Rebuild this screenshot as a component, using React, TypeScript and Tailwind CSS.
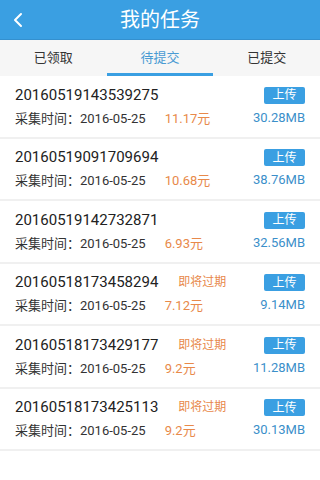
import React from 'react';

type Task = { id: string; price: string; size: string; expiring?: boolean };

const tasks: Task[] = [
  { id: '20160519143539275', price: '11.17元', size: '30.28MB' },
  { id: '20160519091709694', price: '10.68元', size: '38.76MB' },
  { id: '20160519142732871', price: '6.93元', size: '32.56MB' },
  { id: '20160518173458294', price: '7.12元', size: '9.14MB', expiring: true },
  { id: '20160518173429177', price: '9.2元', size: '11.28MB', expiring: true },
  { id: '20160518173425113', price: '9.2元', size: '30.13MB', expiring: true },
];

const tabs = ['已领取', '待提交', '已提交'];

export default function App() {
  return (
    <div className="w-[320px] h-[480px] bg-white overflow-hidden font-['Roboto','Noto_Sans_CJK_SC',sans-serif]">
      <header className="relative h-[40px] bg-[#3a9fe2] flex items-center justify-center border-b border-[#3490cf]">
        <svg className="absolute left-[12px] top-[12px]" width="12" height="16" viewBox="0 0 12 16" fill="none">
          <path d="M9 2 L3 8 L9 14" stroke="white" strokeWidth="2" strokeLinecap="round" strokeLinejoin="round" />
        </svg>
        <h1 className="text-white text-[20px] leading-none">我的任务</h1>
      </header>

      <nav className="h-[36px] bg-[#f6f6f6] flex">
        {tabs.map((t, i) => (
          <div key={t} className="flex-1 flex flex-col items-center">
            <div className={`flex-1 flex items-center text-[13px] pt-[2px] ${i === 1 ? 'text-[#4a9bd3]' : 'text-[#333]'}`}>{t}</div>
            <div className={`h-[3px] w-full ${i === 1 ? 'bg-[#3a9fe2]' : ''}`} />
          </div>
        ))}
      </nav>

      <ul>
        {tasks.map((t) => (
          <li key={t.id} className="h-[62.5px] flex items-center justify-between pl-[15px] pr-[15px] border-b-2 border-[#f0f0f0]">
            <div className="flex flex-col gap-[5px]">
              <div className="flex items-center">
                <span className="text-[15px] text-[#222] leading-[20px]">{t.id}</span>
                {t.expiring && <span className="ml-[20px] text-[12px] text-[#e8894a]">即将过期</span>}
              </div>
              <div className="flex items-center text-[13px] leading-[18px]">
                <span className="text-[#333]">采集时间：2016-05-25</span>
                <span className="ml-[19px] text-[#e8894a]">{t.price}</span>
              </div>
            </div>
            <div className="flex flex-col items-end gap-[5px] pt-[1px]">
              <button className="w-[41px] h-[17px] rounded-[2px] bg-[#3a9fe2] text-white text-[12px] leading-none flex items-center justify-center">上传</button>
              <span className="text-[13px] text-[#3b8fca] leading-[18px]">{t.size}</span>
            </div>
          </li>
        ))}
      </ul>
    </div>
  );
}
